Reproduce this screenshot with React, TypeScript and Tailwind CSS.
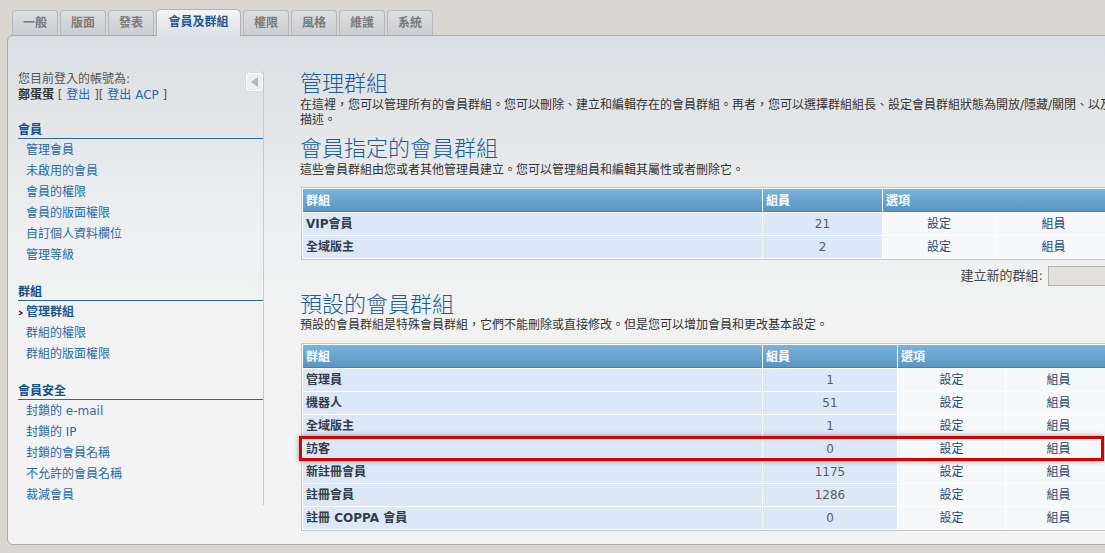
import React from 'react';

const tabs = ['一般', '版面', '發表', '會員及群組', '權限', '風格', '維護', '系統'];

const menu: { title: string; items: string[]; active?: string }[] = [
  { title: '會員', items: ['管理會員', '未啟用的會員', '會員的權限', '會員的版面權限', '自訂個人資料欄位', '管理等級'] },
  { title: '群組', items: ['管理群組', '群組的權限', '群組的版面權限'], active: '管理群組' },
  { title: '會員安全', items: ['封鎖的 e-mail', '封鎖的 IP', '封鎖的會員名稱', '不允許的會員名稱', '裁減會員'] },
];

type Row = { name: string; count: number };

const customGroups: Row[] = [
  { name: 'VIP會員', count: 21 },
  { name: '全域版主', count: 2 },
];

const defaultGroups: Row[] = [
  { name: '管理員', count: 1 },
  { name: '機器人', count: 51 },
  { name: '全域版主', count: 1 },
  { name: '訪客', count: 0 },
  { name: '新註冊會員', count: 1175 },
  { name: '註冊會員', count: 1286 },
  { name: '註冊 COPPA 會員', count: 0 },
];

function GroupTable({ rows, widths }: { rows: Row[]; widths: number[] }) {
  return (
    <table className="ml-px w-[812px] table-fixed border-separate border-spacing-px border border-[#c4c6c8] bg-white">
      <colgroup>
        {widths.map((w, i) => (
          <col key={i} style={{ width: w }} />
        ))}
        <col />
      </colgroup>
      <thead>
        <tr>
          <th className="h-[23px] bg-linear-to-b from-[#7ab4db] to-[#5894c3] px-[3px] py-0 text-left text-[12px] font-bold leading-[22px] text-white shadow-[inset_0_-1px_0_#4a82ae]">群組</th>
          <th className="h-[23px] bg-linear-to-b from-[#7ab4db] to-[#5894c3] px-[3px] py-0 text-left text-[12px] font-bold leading-[22px] text-white shadow-[inset_0_-1px_0_#4a82ae]">組員</th>
          <th colSpan={2} className="h-[23px] bg-linear-to-b from-[#7ab4db] to-[#5894c3] px-[3px] py-0 text-left text-[12px] font-bold leading-[22px] text-white shadow-[inset_0_-1px_0_#4a82ae]">選項</th>
        </tr>
      </thead>
      <tbody>
        {rows.map((r) => (
          <tr key={r.name}>
            <td className="h-[22px] bg-[#dce8f7] px-[3px] py-0 text-[12px] font-bold leading-[22px] text-[#323c48]">{r.name}</td>
            <td className="h-[22px] bg-[#dce8f7] py-0 text-center text-[12px] leading-[22px] text-[#5c5c5c]">{r.count}</td>
            <td className="h-[22px] bg-[#f7f8fa] py-0 text-center text-[12px] leading-[22px] text-[#1d4873]">設定</td>
            <td className="h-[22px] bg-[#f7f8fa] py-0 text-center text-[12px] leading-[22px] text-[#1d4873]">組員</td>
          </tr>
        ))}
      </tbody>
    </table>
  );
}

export default function App() {
  return (
    <div className="h-[553px] w-[1105px] overflow-hidden bg-[#d9d6cf] font-['DejaVu_Sans','Noto_Sans_CJK_TC',sans-serif] text-[12px] text-[#333]">
      <div className="w-[1180px] pl-[7px] pt-[9px]">
        {/* tab strip */}
        <div className="flex h-[26px] items-end gap-[2px] pl-[5px]">
          {tabs.map((t) =>
            t === '會員及群組' ? (
              <div
                key={t}
                className="relative z-10 -mb-px h-[27px] w-[85px] rounded-t-[5px] border border-b-0 border-[#b1b3b6] bg-linear-to-b from-[#f4f5f6] to-[#dde0e4] text-center text-[12px] font-bold leading-[25px] text-[#1f5b93]"
              >
                {t}
              </div>
            ) : (
              <div
                key={t}
                className="h-[25px] w-[46px] rounded-t-[4px] border border-b-0 border-[#b7b9bc] bg-linear-to-b from-[#dddfe2] to-[#cacdd1] text-center text-[12px] font-bold leading-[24px] text-[#7a7a7a]"
              >
                {t}
              </div>
            )
          )}
        </div>

        {/* main panel */}
        <div className="flex h-[510px] rounded-l-[6px] border border-[#a9abad] bg-[linear-gradient(to_bottom,#dbdee2_0px,#eef0f1_200px,#f3f3f3_320px,#f3f3f3)]">
          <aside className="mt-[35px] h-[434px] w-[256px] shrink-0 border-r border-[#c8cacc] pl-[10px]">
            <div className="flex justify-between">
              <div className="leading-[16px] text-[#555]">
                <div>您目前登入的帳號為:</div>
                <div>
                  <span className="font-bold text-[#333]">鄭蛋蛋</span> [ <span className="text-[#2a6aa5]">登出</span> ][ <span className="text-[#2a6aa5]">登出 ACP</span> ]
                </div>
              </div>
              <div className="mt-[2px] flex h-[18px] w-[17px] items-center justify-center rounded-[2px] border border-white bg-[#eceef0] shadow-[0_0_1px_rgba(0,0,0,0.25)]">
                <svg width="7" height="10" viewBox="0 0 7 10">
                  <polygon points="7,0 7,10 0,5" fill="#b4b6b9" />
                </svg>
              </div>
            </div>

            {menu.map((sec, i) => (
              <div key={sec.title} className={i === 0 ? 'mt-[19px]' : 'mt-[18px]'}>
                <div className="border-b border-[#2d6898] font-bold leading-[16px] text-[#12508c]">{sec.title}</div>
                <ul className="pt-px">
                  {sec.items.map((it) =>
                    it === sec.active ? (
                      <li key={it} className="flex items-center leading-[21px]">
                        <svg width="8" height="8" viewBox="0 0 8 8" className="shrink-0">
                          <path d="M1 2 L4 4 L1 6" stroke="#222" strokeWidth="1.3" fill="none" />
                        </svg>
                        <span className="font-bold text-[#1b5a90]">{it}</span>
                      </li>
                    ) : (
                      <li key={it} className="pl-2 leading-[21px] text-[#2a6aa5]">
                        {it}
                      </li>
                    )
                  )}
                </ul>
              </div>
            ))}
          </aside>

          <main className="min-w-0 flex-1 pl-[36px] pt-[35px]">
            <h1 className="text-[22px] font-light leading-[26px] text-[#1c5c98]">管理群組</h1>
            <p className="mt-px whitespace-nowrap leading-[15px] text-[#333]">
              在這裡，您可以管理所有的會員群組。您可以刪除、建立和編輯存在的會員群組。再者，您可以選擇群組組長、設定會員群組狀態為開放/隱藏/關閉、以及設定群組名稱和
              <br />
              描述。
            </p>

            <h2 className="mt-[8px] text-[22px] font-light leading-[26px] text-[#1c5c98]">會員指定的會員群組</h2>
            <p className="mt-px leading-[15px] text-[#333]">這些會員群組由您或者其他管理員建立。您可以管理組員和編輯其屬性或者刪除它。</p>

            <div className="mt-[9px]">
              <GroupTable rows={customGroups} widths={[459, 119, 112]} />
            </div>

            <div className="mt-[6px] flex w-[812px] items-center justify-end gap-[5px]">
              <span className="text-[13px] text-[#444]">建立新的群組:</span>
              <div className="h-[20px] w-[64px] border border-r-0 border-[#aeb0b2] bg-[#e3e0db]" />
            </div>

            <h2 className="mt-[6px] text-[22px] font-light leading-[26px] text-[#1c5c98]">預設的會員群組</h2>
            <p className="leading-[15px] text-[#333]">預設的會員群組是特殊會員群組，它們不能刪除或直接修改。但是您可以增加會員和更改基本設定。</p>

            <div className="relative mt-[10px]">
              <GroupTable rows={defaultGroups} widths={[459, 134, 107]} />
              {/* highlight around the guest row */}
              <div className="pointer-events-none absolute left-[-1px] top-[93px] h-[25px] w-[805px] border-[3px] border-[#d30000] shadow-[0_0_5px_rgba(0,0,0,0.4)]" />
            </div>
          </main>
        </div>
      </div>
    </div>
  );
}
